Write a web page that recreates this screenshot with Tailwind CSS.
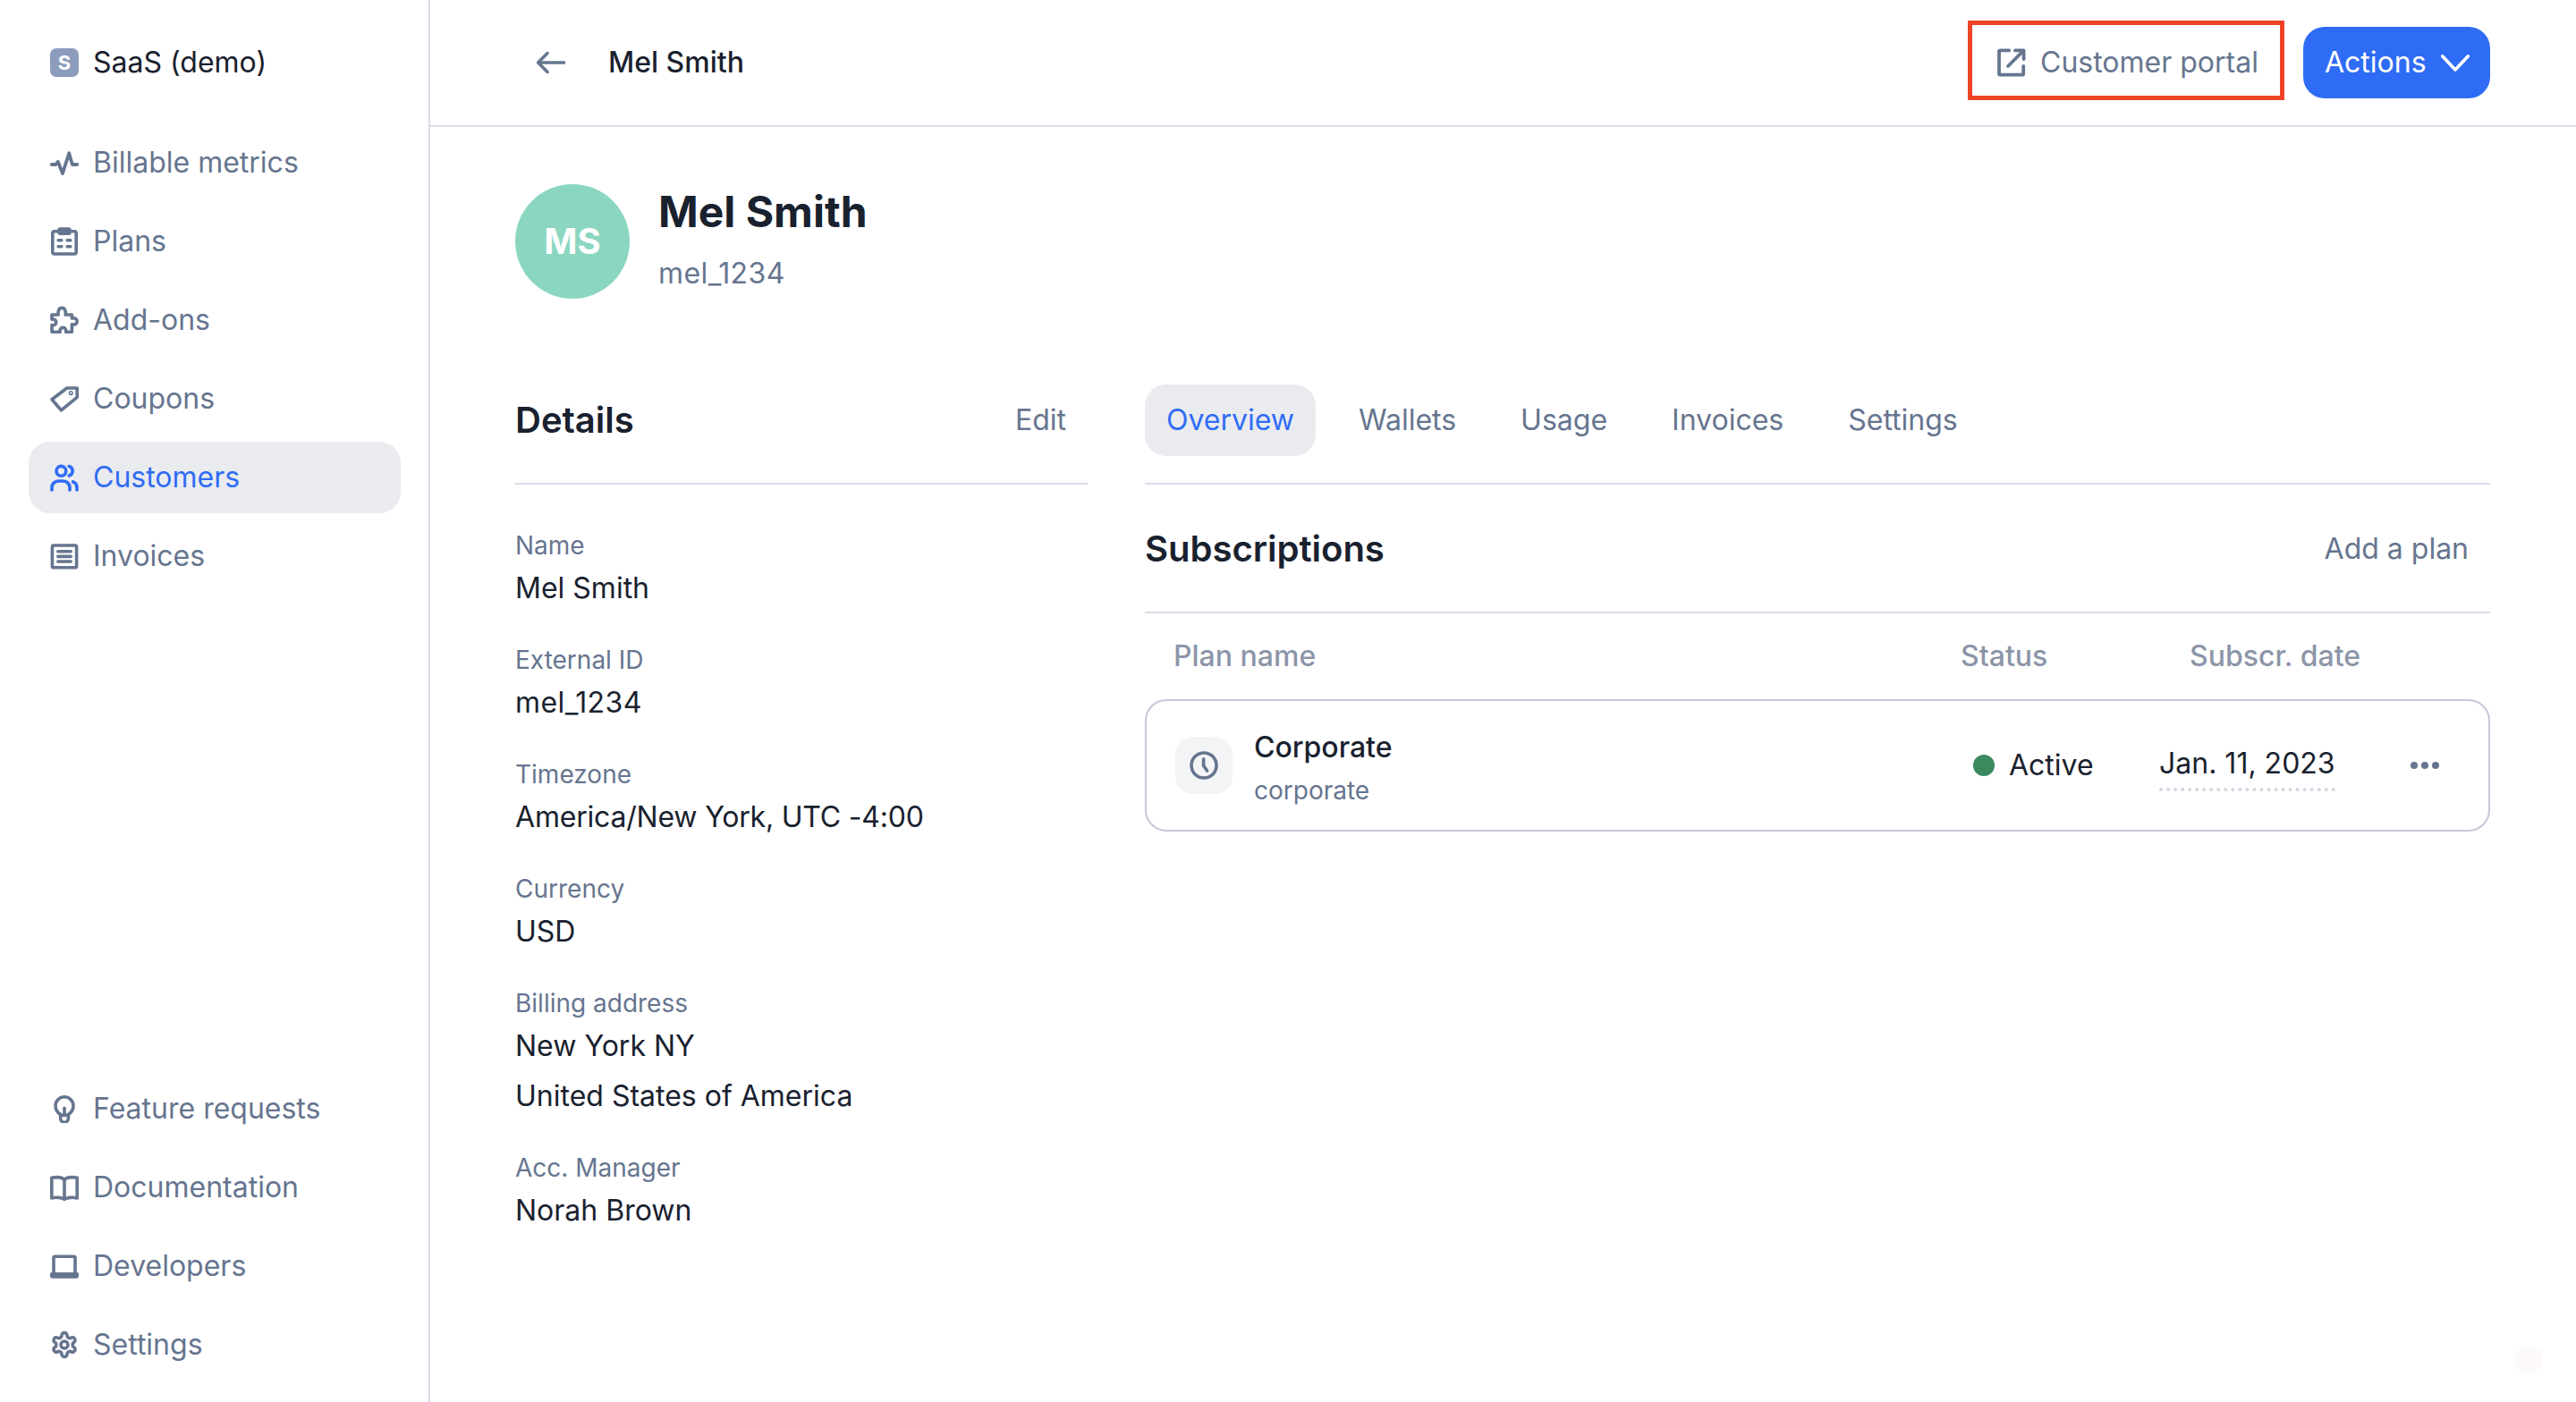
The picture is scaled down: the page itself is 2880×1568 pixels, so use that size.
<!DOCTYPE html>
<html lang="en">
<head>
    <meta charset="UTF-8">
    <title>Mel Smith - Lago</title>
    <script src="https://cdn.jsdelivr.net/npm/@tailwindcss/browser@4"></script>
</head>
<body class="bg-white font-['Inter',sans-serif] text-[32px] text-[#19212e] overflow-hidden">
<div class="relative flex h-[1568px] w-[2880px]">
    <!-- sidebar -->
    <aside class="w-[481px] shrink-0 border-r-2 border-[#d9dee7] flex flex-col justify-between pl-[32px] pr-[31px] pt-[30px] pb-[24px] text-[#66758f]">
        <div>
            <div class="flex items-center gap-[16px] h-[80px] px-[24px] text-[#19212e]">
                <span class="w-[32px] h-[32px] rounded-[7px] bg-[#8c9cbd] text-white font-bold text-[22px] flex items-center justify-center">S</span>
                <span>SaaS (demo)</span>
            </div>
            <nav class="mt-[32px] flex flex-col gap-[8px]">
                <a class="flex items-center gap-[16px] h-[80px] px-[24px] rounded-[24px]">
                    <svg class="w-[32px] h-[32px]" viewBox="0 0 16 16" fill="none" stroke="currentColor" stroke-width="1.9" stroke-linecap="round" stroke-linejoin="round"><path d="M0.9 9H3.2L4.4 7.4L7 14L10.6 2.6L12.4 9H15.1"/></svg>
                    <span>Billable metrics</span>
                </a>
                <a class="flex items-center gap-[16px] h-[80px] px-[24px] rounded-[24px]">
                    <svg class="w-[32px] h-[32px]" viewBox="0 0 16 16" fill="none" stroke="currentColor" stroke-width="1.8" stroke-linecap="round" stroke-linejoin="round"><rect x="1.4" y="2.4" width="13.2" height="12.6" rx="1"/><rect x="5" y="1" width="6" height="2.6" rx="0.6"/><path d="M4.6 7.4H6.4M9.6 7.4H11.4M4.6 10.9H6.4M9.6 10.9H11.4"/></svg>
                    <span>Plans</span>
                </a>
                <a class="flex items-center gap-[16px] h-[80px] px-[24px] rounded-[24px]">
                    <svg class="w-[32px] h-[32px]" viewBox="0 0 16 16" fill="none" stroke="currentColor" stroke-width="1.8" stroke-linecap="round" stroke-linejoin="round"><path d="M1 5H4.6C4.2 2.8 5 1.2 6.6 1.2C8.2 1.2 9 2.8 8.6 5H12.2V7C14 6.6 15.1 7.4 15.1 8.7C15.1 10 14 10.8 12.2 10.4V14.6H8.8C9.1 13.2 8.4 12.2 7.2 12.2C6 12.2 5.3 13.2 5.6 14.6H1V10.8C2.4 11.1 3.4 10.4 3.4 9.2C3.4 8 2.4 7.3 1 7.6Z"/></svg>
                    <span>Add-ons</span>
                </a>
                <a class="flex items-center gap-[16px] h-[80px] px-[24px] rounded-[24px]">
                    <svg class="w-[32px] h-[32px]" viewBox="0 0 16 16" fill="none" stroke="currentColor" stroke-width="1.8" stroke-linecap="round" stroke-linejoin="round"><path d="M1 8.4L9.4 2H15.1V7.2L6.2 14.4Z"/><circle cx="11.6" cy="4.8" r="0.4"/></svg>
                    <span>Coupons</span>
                </a>
                <a class="flex items-center gap-[16px] h-[80px] px-[24px] rounded-[24px] bg-[#e9ebef] text-[#2f6cf5]">
                    <svg class="w-[32px] h-[32px]" viewBox="0 0 16 16" fill="none" stroke="currentColor" stroke-width="1.8" stroke-linecap="round" stroke-linejoin="round"><circle cx="6.2" cy="4.4" r="2.7"/><path d="M1 15V13.6A3.6 3.6 0 0 1 4.6 10H7.4A3.6 3.6 0 0 1 11 13.6V15"/><path d="M10.6 1.8A2.7 2.7 0 0 1 10.6 7"/><path d="M15 15V13.6A3.6 3.6 0 0 0 12.8 10.4"/></svg>
                    <span>Customers</span>
                </a>
                <a class="flex items-center gap-[16px] h-[80px] px-[24px] rounded-[24px]">
                    <svg class="w-[32px] h-[32px]" viewBox="0 0 16 16" fill="none" stroke="currentColor" stroke-width="1.8" stroke-linecap="round" stroke-linejoin="round"><rect x="1.2" y="2" width="13.6" height="12.4" rx="0.8"/><path d="M4.4 5.4H11.6M4.4 8.2H11.6M4.4 11H11.6"/></svg>
                    <span>Invoices</span>
                </a>
            </nav>
        </div>
        <nav class="flex flex-col gap-[8px]">
            <a class="flex items-center gap-[16px] h-[80px] px-[24px]">
                <svg class="w-[32px] h-[32px]" viewBox="0 0 16 16" fill="none" stroke="currentColor" stroke-width="1.8" stroke-linecap="round" stroke-linejoin="round"><path d="M5.8 11.2C4.2 10.2 3 8.6 3 6.4A5 5 0 0 1 13 6.4C13 8.6 11.8 10.2 10.2 11.2V13.4A2.2 2.2 0 0 1 5.8 13.4Z"/><path d="M8 7.6V11.4M5.8 11.6H10.2"/></svg>
                <span>Feature requests</span>
            </a>
            <a class="flex items-center gap-[16px] h-[80px] px-[24px]">
                <svg class="w-[32px] h-[32px]" viewBox="0 0 16 16" fill="none" stroke="currentColor" stroke-width="1.8" stroke-linecap="round" stroke-linejoin="round"><path d="M8 3.6C6.4 2.2 3.2 2.2 0.9 2.6V14C3.2 13.4 6.4 13.6 8 14.6C9.6 13.6 12.8 13.4 15.1 14V2.6C12.8 2.2 9.6 2.2 8 3.6Z"/><path d="M8 3.6V14.6"/></svg>
                <span>Documentation</span>
            </a>
            <a class="flex items-center gap-[16px] h-[80px] px-[24px]">
                <svg class="w-[32px] h-[32px]" viewBox="0 0 16 16" fill="none" stroke="currentColor" stroke-width="1.8" stroke-linecap="round" stroke-linejoin="round"><path d="M2 12V3.4A.8.8 0 0 1 2.8 2.6H13.2A.8.8 0 0 1 14 3.4V12"/><path d="M0.9 12.4H15.1V13.4A.6.6 0 0 1 14.5 14H1.5A.6.6 0 0 1 .9 13.4Z"/></svg>
                <span>Developers</span>
            </a>
            <a class="flex items-center gap-[16px] h-[80px] px-[24px]">
                <svg class="w-[32px] h-[32px]" viewBox="0 0 24 24" fill="none" stroke="currentColor" stroke-width="2.7" stroke-linecap="round" stroke-linejoin="round"><path d="M12.22 2h-.44a2 2 0 0 0-2 2v.18a2 2 0 0 1-1 1.73l-.43.25a2 2 0 0 1-2 0l-.15-.08a2 2 0 0 0-2.73.73l-.22.38a2 2 0 0 0 .73 2.73l.15.1a2 2 0 0 1 1 1.72v.51a2 2 0 0 1-1 1.74l-.15.09a2 2 0 0 0-.73 2.73l.22.38a2 2 0 0 0 2.73.73l.15-.08a2 2 0 0 1 2 0l.43.25a2 2 0 0 1 1 1.73V20a2 2 0 0 0 2 2h.44a2 2 0 0 0 2-2v-.18a2 2 0 0 1 1-1.73l.43-.25a2 2 0 0 1 2 0l.15.08a2 2 0 0 0 2.73-.73l.22-.39a2 2 0 0 0-.73-2.73l-.15-.08a2 2 0 0 1-1-1.74v-.5a2 2 0 0 1 1-1.74l.15-.09a2 2 0 0 0 .73-2.73l-.22-.38a2 2 0 0 0-2.73-.73l-.15.08a2 2 0 0 1-2 0l-.43-.25a2 2 0 0 1-1-1.73V4a2 2 0 0 0-2-2z"/><circle cx="12" cy="12" r="3"/></svg>
                <span>Settings</span>
            </a>
        </nav>
    </aside>

    <main class="flex-1 min-w-0">
        <!-- top bar -->
        <header class="h-[142px] border-b-2 border-[#d9dee7] flex items-center justify-between pl-[119px] pr-[96px]">
            <div class="flex items-center gap-[48px]">
                <svg class="w-[32px] h-[32px]" viewBox="0 0 16 16" fill="none" stroke="#66758f" stroke-width="1.8" stroke-linecap="round" stroke-linejoin="round"><path d="M15.4 8H.8M6 2.8L.8 8L6 13.2"/></svg>
                <span class="font-medium">Mel Smith</span>
            </div>
            <div class="flex items-center gap-[21px]">
                <button class="h-[89px] w-[354px] mb-[5px] pt-[5px] border-[5px] border-[#ee4327] flex items-center gap-[16px] pl-[28px] text-[#66758f]">
                    <svg class="w-[32px] h-[32px]" viewBox="0 0 16 16" fill="none" stroke="currentColor" stroke-width="1.9" stroke-linecap="round" stroke-linejoin="round"><path d="M6.6 1.2H1.6A.6.6 0 0 0 1 1.8V14.2A.6.6 0 0 0 1.6 14.8H14A.6.6 0 0 0 14.6 14.2V10"/><path d="M6 10L14.4 1.6M10 1.2H14.8V6"/></svg>
                    <span>Customer portal</span>
                </button>
                <button class="h-[80px] w-[209px] rounded-[24px] bg-[#2f6cf5] text-white flex items-center gap-[16px] pl-[24px]">
                    <span>Actions</span>
                    <svg class="w-[32px] h-[32px]" viewBox="0 0 16 16" fill="none" stroke="currentColor" stroke-width="1.8" stroke-linecap="round" stroke-linejoin="round"><path d="M.8 4.4L8 12L15.2 4.4"/></svg>
                </button>
            </div>
        </header>

        <div class="pl-[95px] pr-[96px]">
            <!-- customer heading -->
            <div class="flex items-start gap-[32px] mt-[64px] h-[128px]">
                <div class="w-[128px] h-[128px] rounded-full bg-[#8bd6c1] text-white font-bold text-[40px] flex items-center justify-center">MS</div>
                <div>
                    <h1 class="text-[48px] leading-[62px] font-bold">Mel Smith</h1>
                    <p class="text-[#66758f] leading-[44px] mt-[16px] tracking-[0.4px]">mel_1234</p>
                </div>
            </div>

            <div class="flex gap-[64px] mt-[96px]">
                <!-- details -->
                <section class="w-[640px] shrink-0">
                    <div class="h-[112px] flex justify-between items-start border-b-2 border-[#d9dee7]">
                        <h2 class="h-[80px] flex items-center text-[40px] font-semibold">Details</h2>
                        <span class="h-[80px] flex items-center px-[24px] text-[#66758f]">Edit</span>
                    </div>
                    <dl class="mt-[49px] flex flex-col gap-[33px]">
                        <div>
                            <dt class="text-[28px] leading-[39px] text-[#66758f]">Name</dt>
                            <dd class="leading-[56px]">Mel Smith</dd>
                        </div>
                        <div>
                            <dt class="text-[28px] leading-[39px] text-[#66758f]">External ID</dt>
                            <dd class="leading-[56px] tracking-[0.4px]">mel_1234</dd>
                        </div>
                        <div>
                            <dt class="text-[28px] leading-[39px] text-[#66758f]">Timezone</dt>
                            <dd class="leading-[56px] tracking-[-0.2px]">America/New York, UTC -4:00</dd>
                        </div>
                        <div>
                            <dt class="text-[28px] leading-[39px] text-[#66758f]">Currency</dt>
                            <dd class="leading-[56px]">USD</dd>
                        </div>
                        <div>
                            <dt class="text-[28px] leading-[39px] text-[#66758f]">Billing address</dt>
                            <dd class="leading-[56px]">New York NY</dd>
                            <dd class="leading-[56px]">United States of America</dd>
                        </div>
                        <div>
                            <dt class="text-[28px] leading-[39px] text-[#66758f]">Acc. Manager</dt>
                            <dd class="leading-[56px]">Norah Brown</dd>
                        </div>
                    </dl>
                </section>

                <!-- overview -->
                <section class="flex-1 min-w-0">
                    <div class="h-[112px] flex items-start gap-[24px] border-b-2 border-[#d9dee7] text-[#66758f]">
                        <span class="h-[80px] px-[24px] rounded-[24px] bg-[#e9ebef] text-[#2f6cf5] flex items-center">Overview</span>
                        <span class="h-[80px] px-[24px] flex items-center">Wallets</span>
                        <span class="h-[80px] px-[24px] flex items-center">Usage</span>
                        <span class="h-[80px] px-[24px] flex items-center">Invoices</span>
                        <span class="h-[80px] px-[24px] flex items-center">Settings</span>
                    </div>
                    <div class="h-[144px] pt-[2px] flex items-center justify-between border-b-2 border-[#d9dee7] pr-[24px]">
                        <h2 class="text-[40px] font-semibold">Subscriptions</h2>
                        <span class="text-[#66758f]">Add a plan</span>
                    </div>
                    <div class="h-[96px] flex items-center font-medium text-[#8c95a8]">
                        <span class="ml-[32px] w-[880px]">Plan name</span>
                        <span class="w-[256px]">Status</span>
                        <span>Subscr. date</span>
                    </div>
                    <div class="h-[148px] rounded-[24px] border-2 border-[#c4c9d9] flex items-center pl-[32px]">
                        <div class="w-[64px] h-[64px] rounded-[20px] bg-[#f3f4f6] flex items-center justify-center text-[#66758f]">
                            <svg class="w-[32px] h-[32px]" viewBox="0 0 16 16" fill="none" stroke="currentColor" stroke-width="1.8" stroke-linecap="round" stroke-linejoin="round"><circle cx="8" cy="8" r="7"/><path d="M7.8 4.4V8.2L9.8 11"/></svg>
                        </div>
                        <div class="ml-[24px] w-[804px] pt-[8px]">
                            <div class="font-medium leading-[48px]">Corporate</div>
                            <div class="text-[28px] leading-[48px] text-[#66758f]">corporate</div>
                        </div>
                        <div class="flex items-center gap-[16px] w-[208px]">
                            <span class="w-[24px] h-[24px] rounded-full bg-[#3b8a5e]"></span>
                            <span>Active</span>
                        </div>
                        <span class="mt-[3px] border-b-[4px] border-dotted border-[#d3d7e2] leading-[48px] pb-[3px]">Jan. 11, 2023</span>
                        <div class="ml-[84px] flex gap-[4px]">
                            <span class="w-[8px] h-[8px] rounded-full bg-[#66758f]"></span>
                            <span class="w-[8px] h-[8px] rounded-full bg-[#66758f]"></span>
                            <span class="w-[8px] h-[8px] rounded-full bg-[#66758f]"></span>
                        </div>
                    </div>
                </section>
            </div>
        </div>
    </main>

    <!-- faint gift widget, bottom right -->
    <svg class="absolute left-[2812px] top-[1505px] w-[30px] h-[32px]" viewBox="0 0 30 32" fill="#fdf9f9"><path d="M8 0L15 4L22 0L26 6H30V24L15 32L0 24V6H4Z"/></svg>
</div>
</body>
</html>
